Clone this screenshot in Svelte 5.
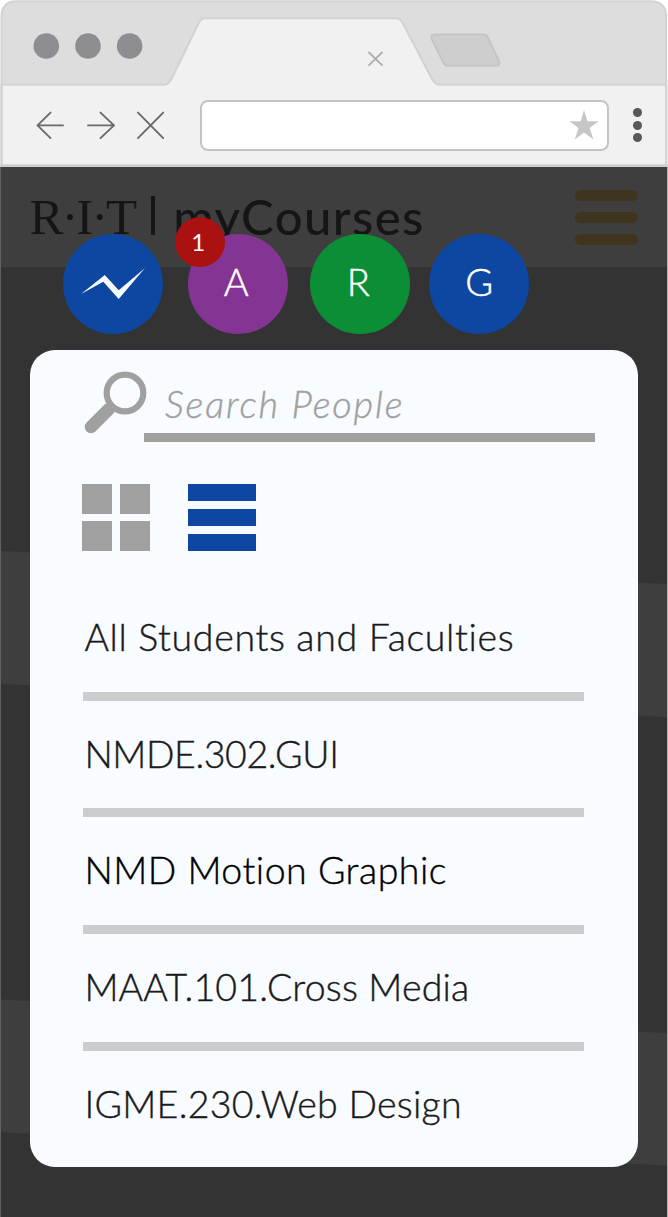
<script>
  const people = [
    { label: 'A', color: '#843492', left: 25, badge: '1' },
    { label: 'R', color: '#0c8e36', left: 22 },
    { label: 'G', color: '#0e47a1', left: 19.5 }
  ];
  const groups = [
    { name: 'All Students and Faculties', spacing: 0.66 },
    { name: 'NMDE.302.GUI', spacing: -0.4 },
    { name: 'NMD Motion Graphic', spacing: 0.5, active: true },
    { name: 'MAAT.101.Cross Media', spacing: 0.16 },
    { name: 'IGME.230.Web Design', spacing: 0.28 }
  ];
</script>

<div class="window">
  <div class="chrome">
    <svg class="tabs" width="668" height="167" viewBox="0 0 668 167">
      <path d="M1.5 168V17Q1.5 1.2 17 1.2H650Q666.2 1.2 666.2 17V168Z" fill="#ddd" />
      <path d="M1.5 84.8H163Q168.500 84.800 171.500 79L199 22.500Q201 18.200 205 18.200H396Q400.500 18.200 402.500 22.500L432 79Q435 84.800 440 84.800H666.200V165.500H1.500Z" fill="#f1f1f1" stroke="#d2d2d2" stroke-width="2" />
      <path d="M1.5 168V17Q1.5 1.2 17 1.2H650Q666.2 1.2 666.2 17V168" fill="none" stroke="#d2d2d2" stroke-width="2" />
      <path d="M0 165.800H668" stroke="#cecece" stroke-width="2.400" />
      <g fill="#8e8d92"><circle cx="46.300" cy="46" r="12.800" /><circle cx="88" cy="46" r="12.800" /><circle cx="129.600" cy="46" r="12.800" /></g>
      <path d="M369 52.500L382 65.200M382 52.500L369 65.200" stroke="#aeaeae" stroke-width="1.800" stroke-linecap="round" />
      <path d="M434 34.500H484Q486.300 34.500 487.300 36.500L499 61Q500.500 65.500 496 65.800H447.500Q445 65.800 443.800 63.500L432 39.500Q430 35.500 434 34.500Z" fill="#cecece" stroke="#c5c5c5" stroke-width="2" />
    </svg>
    <div class="toolbar">
      <svg width="128" height="28" viewBox="0 0 128 28" fill="none" stroke="#6a6a6c" stroke-width="1.900" stroke-linecap="round" stroke-linejoin="round">
        <path d="M27 14.400H1.500M14.500 1.600L1.500 14.400L14.500 27.100" />
        <path d="M52 14.400H78M64.500 1.600L78 14.400L64.500 27.100" />
        <path d="M102 1.600L127.200 27.100M127.200 1.600L102 27.100" />
      </svg>
      <div class="address">
        <svg width="30" height="30" viewBox="0 0 30 30"><path d="M15 0L18.500 11.300H29.700L20.500 18L24.500 29.500L15 22.500L5.800 29.500L9.500 18L.5 11.300H11.700Z" fill="#c6c6c6" /></svg>
      </div>
      <div class="more"><i></i><i></i><i></i></div>
    </div>
  </div>

  <main>
    <svg class="stripes" width="668" height="1050" viewBox="0 167 668 1050">
      <path d="M0 550.500L668 583.800V717L0 684ZM0 1000.500L668 1034V1167L0 1133.500Z" fill="#3e3e3e" />
    </svg>
    <header>
      <div class="brand"><span class="rit">R·I·T</span><span class="bar"></span><span class="site">myCourses</span></div>
      <div class="menu"><i></i><i></i><i></i></div>
    </header>

    <div class="heads">
      <div class="head" style="background:#0e47a1">
        <svg width="64" height="32" viewBox="0 0 64 32"><path d="M0 26L23.800 7L37.700 22.300L64 0L37.700 31L22.300 13.700Z" fill="#f8fbff" /></svg>
      </div>
      {#each people as p}
        <div class="head" style="background:{p.color};margin-left:{p.left}px">
          <span>{p.label}</span>
          {#if p.badge}<b class="badge">{p.badge}</b>{/if}
        </div>
      {/each}
    </div>

    <section class="panel">
      <div class="search">
        <svg width="64" height="64" viewBox="0 0 64 64" fill="none" stroke="#a0a0a0">
          <path d="M25 38L7 56" stroke-width="12.500" stroke-linecap="round" />
          <circle cx="41" cy="22" r="18.300" fill="#f8fbff" stroke-width="6.200" />
        </svg>
        <div class="field"><span>Search People</span></div>
      </div>
      <div class="views">
        <div class="grid"><i></i><i></i><i></i><i></i></div>
        <div class="list"><i></i><i></i><i></i></div>
      </div>
      <ul>
        {#each groups as g}
          <li class:active={g.active}><span style="letter-spacing:{g.spacing}px">{g.name}</span></li>
        {/each}
      </ul>
    </section>
  </main>
</div>

<style>
  :global(body) { margin: 0; background: #fff; }
  .window { width: 668px; height: 1217px; overflow: hidden; font-family: Lato, sans-serif; font-weight: 300; }
  .window, .window * { box-sizing: border-box; }
  svg { display: block; flex: none; }
  .chrome { position: relative; height: 167px; padding-top: 85px; }
  .tabs { position: absolute; left: 0; top: 0; }
  .toolbar { position: relative; height: 82px; display: flex; align-items: center; padding: 0 0 2px 35.500px; }
  .address { margin-left: 36.500px; width: 409px; height: 51px; border: 2px solid #c4c4c4; border-radius: 8px; background: #fff; display: flex; align-items: center; justify-content: flex-end; padding-right: 8px; }
  .more { margin-left: 24px; display: flex; flex-direction: column; gap: 3.500px; }
  .more i { width: 9px; height: 9px; border-radius: 50%; background: #58585a; }

  main { position: relative; height: 1050px; background: #333; border-left: 1px solid #616161; border-right: 1px solid #b4b4b4; }
  .stripes { position: absolute; left: 0; top: 0; width: 666px; }
  header { position: relative; height: 100px; background: #3e3e3e; display: flex; justify-content: space-between; align-items: flex-start; padding: 23px 29px 0 29px; }
  .brand { display: flex; color: #151515; }
  .rit { font: 51px/50px "Liberation Serif", serif; letter-spacing: -2.100px; margin-top: 2px; margin-left: -.5px; }
  .bar { width: 4px; height: 39px; margin: 6px 0 0 16px; background: #151515; }
  .site { font-size: 49px; line-height: 50px; font-weight: 500; margin: 1px 0 0 18px; letter-spacing: 1.400px; }
  .menu { display: flex; flex-direction: column; gap: 11.500px; padding-top: 0; }
  .menu i { width: 63px; height: 10.500px; border-radius: 6px; background: #3f351f; }

  .heads { position: relative; display: flex; margin-top: -33.500px; padding-left: 61.800px; }
  .head { position: relative; width: 100px; height: 100.500px; border-radius: 50%; display: flex; align-items: center; justify-content: center; color: #fff; font-size: 38px; line-height: 46px; -webkit-text-stroke: .5px currentColor; }
  .head span { margin-top: -5px; margin-right: 3px; }
  .head:last-child span { margin-right: 0; }
  .badge { position: absolute; left: -12.500px; top: -17px; width: 50px; height: 50px; border-radius: 50%; background: #aa1111; font-size: 24px; font-weight: 400; line-height: 49px; text-align: center; padding-right: 4px; -webkit-text-stroke: 0; }

  .panel { position: relative; margin: 16px 0 0 28.500px; width: 608.500px; height: 817px; border-radius: 25px; background: #f8fbff; padding: 21px 43px 0 52.800px; }
  .search { display: flex; height: 71px; }
  .search svg { margin-left: 1.500px; }
  .field { flex: 1; margin-left: -4.300px; border-bottom: 9px solid #a0a09f; padding: 9px 0 0 21.500px; color: #a0a0a0; font-size: 38px; line-height: 46px; font-style: italic; white-space: nowrap; letter-spacing: 1.850px; -webkit-text-stroke: .4px currentColor; }
  .views { display: flex; margin-top: 42px; gap: 38px; margin-left: -.2px; }
  .grid { display: grid; grid-template-columns: 30px 30px; grid-auto-rows: 30px; gap: 7px 8px; }
  .grid i { background: #a0a0a0; }
  .list { width: 68px; display: flex; flex-direction: column; gap: 8px; }
  .list i { height: 17px; background: #0e47a1; }
  ul { list-style: none; margin: 33px 0 0 .4px; padding: 0; width: 501px; }
  li { height: 116.700px; border-bottom: 9px solid #cbcccd; padding: 30px 0 0 1.700px; color: #1a1a1a; font-size: 37.500px; line-height: 46px; white-space: nowrap; -webkit-text-stroke: .4px currentColor; }
  li:last-child { border: 0; }
  li.active { color: #000; }
</style>
